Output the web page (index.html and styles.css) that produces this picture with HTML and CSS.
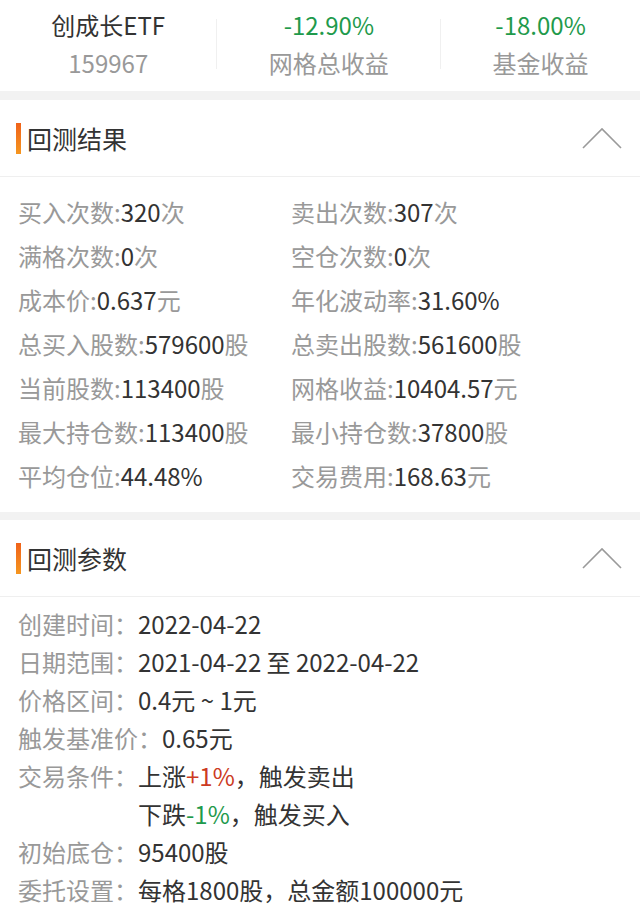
FILE: index.html
```html
<!DOCTYPE html>
<html lang="zh-CN">
<head>
    <meta charset="UTF-8">
    <meta name="viewport" content="width=device-width, initial-scale=1.0">
    <title>网格回测</title>
    <link rel="stylesheet" href="styles.css">
</head>
<body>
<div class="summary">
    <div class="summary-item">
        <div class="summary-main">创成长ETF</div>
        <div class="summary-sub">159967</div>
    </div>
    <div class="summary-divider"></div>
    <div class="summary-item">
        <div class="summary-main down">-12.90%</div>
        <div class="summary-sub">网格总收益</div>
    </div>
    <div class="summary-divider"></div>
    <div class="summary-item">
        <div class="summary-main down">-18.00%</div>
        <div class="summary-sub">基金收益</div>
    </div>
</div>

<section class="panel">
    <div class="panel-head">
        <h2 class="panel-title">回测结果</h2>
        <svg class="chevron" width="40" height="22" viewBox="0 0 40 22">
            <polyline points="1,21 20,2 39,21" fill="none" stroke="#9a9a9a" stroke-width="1.6"/>
        </svg>
    </div>
    <div class="stats">
        <div class="stat"><span class="label">买入次数:</span><span class="value">320</span><span class="label">次</span></div>
        <div class="stat"><span class="label">卖出次数:</span><span class="value">307</span><span class="label">次</span></div>
        <div class="stat"><span class="label">满格次数:</span><span class="value">0</span><span class="label">次</span></div>
        <div class="stat"><span class="label">空仓次数:</span><span class="value">0</span><span class="label">次</span></div>
        <div class="stat"><span class="label">成本价:</span><span class="value">0.637</span><span class="label">元</span></div>
        <div class="stat"><span class="label">年化波动率:</span><span class="value">31.60%</span></div>
        <div class="stat"><span class="label">总买入股数:</span><span class="value">579600</span><span class="label">股</span></div>
        <div class="stat"><span class="label">总卖出股数:</span><span class="value">561600</span><span class="label">股</span></div>
        <div class="stat"><span class="label">当前股数:</span><span class="value">113400</span><span class="label">股</span></div>
        <div class="stat"><span class="label">网格收益:</span><span class="value">10404.57</span><span class="label">元</span></div>
        <div class="stat"><span class="label">最大持仓数:</span><span class="value">113400</span><span class="label">股</span></div>
        <div class="stat"><span class="label">最小持仓数:</span><span class="value">37800</span><span class="label">股</span></div>
        <div class="stat"><span class="label">平均仓位:</span><span class="value">44.48%</span></div>
        <div class="stat"><span class="label">交易费用:</span><span class="value">168.63</span><span class="label">元</span></div>
    </div>
</section>

<section class="panel">
    <div class="panel-head">
        <h2 class="panel-title">回测参数</h2>
        <svg class="chevron" width="40" height="22" viewBox="0 0 40 22">
            <polyline points="1,21 20,2 39,21" fill="none" stroke="#9a9a9a" stroke-width="1.6"/>
        </svg>
    </div>
    <div class="params">
        <div class="param"><span class="param-label">创建时间：</span><div class="param-value">2022-04-22</div></div>
        <div class="param"><span class="param-label">日期范围：</span><div class="param-value">2021-04-22 至 2022-04-22</div></div>
        <div class="param"><span class="param-label">价格区间：</span><div class="param-value">0.4元 ~ 1元</div></div>
        <div class="param"><span class="param-label">触发基准价：</span><div class="param-value">0.65元</div></div>
        <div class="param">
            <span class="param-label">交易条件：</span>
            <div class="param-value">
                <div>上涨<span class="up">+1%</span>，触发卖出</div>
                <div>下跌<span class="down">-1%</span>，触发买入</div>
            </div>
        </div>
        <div class="param"><span class="param-label">初始底仓：</span><div class="param-value">95400股</div></div>
        <div class="param"><span class="param-label">委托设置：</span><div class="param-value">每格1800股，总金额100000元</div></div>
    </div>
</section>
</body>
</html>
```

FILE: styles.css
```css
body {
    margin: 0;
    background: #f2f2f2;
    font-family: "Noto Sans CJK SC", "Noto Sans", sans-serif;
    color: #333333;
}

/* top summary strip */
.summary {
    display: flex;
    justify-content: space-evenly;
    align-items: center;
    background: #ffffff;
    padding: 6px 0 9px;
}

.summary-item {
    text-align: center;
    font-size: 24px;
    line-height: 38px;
}

.summary-main {
    color: #333333;
}

.summary-sub {
    color: #999999;
}

.summary-divider {
    width: 1px;
    height: 50px;
    background: #f0f0f0;
}

.down {
    color: #1f9a4c;
}

.up {
    color: #cc3a22;
}

/* panels */
.panel {
    background: #ffffff;
    margin-top: 9px;
}

.panel + .panel {
    margin-top: 8px;
}

.panel-head {
    display: flex;
    justify-content: space-between;
    align-items: center;
    height: 76px;
    padding: 0 18px 0 16px;
    border-bottom: 1px solid #efefef;
}

.panel-title {
    display: flex;
    align-items: center;
    gap: 6px;
    margin: 0;
    font-size: 25px;
    font-weight: 400;
    color: #333333;
}

.panel-title::before {
    content: "";
    width: 5px;
    height: 31px;
    background: linear-gradient(#f0621a, #f5961f);
}

.chevron {
    display: block;
}

/* result grid */
.stats {
    display: grid;
    grid-template-columns: 273px 1fr;
    padding: 13px 0 14px 18px;
    font-size: 24px;
    line-height: 44px;
}

.stat {
    white-space: nowrap;
}

.label {
    color: #999999;
}

.value {
    color: #333333;
}

/* parameter list */
.params {
    padding: 8px 0 16px 18px;
    font-size: 24px;
    line-height: 38px;
}

.param {
    display: flex;
}

.param-label {
    color: #999999;
}

.param-value {
    color: #333333;
}
```
